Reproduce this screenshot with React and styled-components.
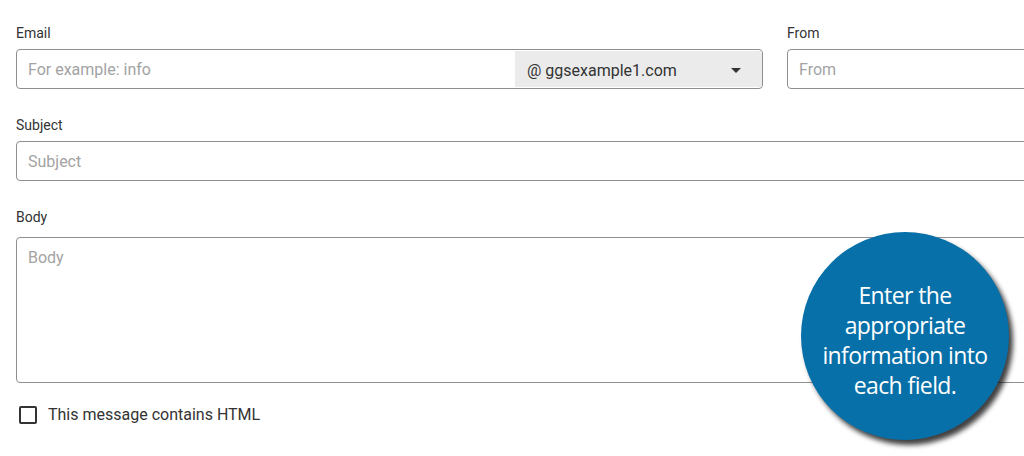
import styled, { createGlobalStyle } from 'styled-components';

const GlobalStyle = createGlobalStyle`
  html, body {
    margin: 0;
    padding: 0;
    background: #ffffff;
    overflow: hidden;
    font-family: Roboto, "Liberation Sans", sans-serif;
  }
`;

const Page = styled.div`
  position: relative;
  width: 1024px;
  height: 456px;
  overflow: hidden;
  padding: 24px 0 0 16px;
  box-sizing: border-box;
`;

const Row = styled.div`
  display: flex;
  gap: 24px;
  width: 1060px;
  margin-bottom: ${(p) => p.gapBelow || '27px'};
`;

const Field = styled.div`
  display: flex;
  flex-direction: column;
  flex: ${(p) => (p.width ? `0 0 ${p.width}` : '1')};
`;

const Label = styled.label`
  font-size: 14px;
  color: #333;
  height: 17px;
  line-height: 17px;
  margin-top: 1px;
  margin-bottom: ${(p) => p.gapBelow || '7px'};
`;

const Box = styled.div`
  display: flex;
  align-items: stretch;
  height: ${(p) => p.height || '40px'};
  border: 1px solid #8f8f8f;
  border-radius: 4px;
  box-sizing: border-box;
  overflow: hidden;
`;

const Input = styled.input`
  flex: 1;
  min-width: 0;
  border: none;
  outline: none;
  padding: 0 11px;
  font-family: Roboto, "Liberation Sans", sans-serif;
  font-size: 16px;
  color: #333;
  background: transparent;
  &::placeholder {
    color: #a3a3a3;
  }
`;

const TextArea = styled.textarea`
  flex: 1;
  border: none;
  outline: none;
  resize: none;
  padding: 10px 11px;
  font-family: Roboto, "Liberation Sans", sans-serif;
  font-size: 16px;
  background: transparent;
  &::placeholder {
    color: #a3a3a3;
  }
`;

const Domain = styled.div`
  display: flex;
  align-items: center;
  justify-content: space-between;
  width: 247px;
  margin: 1px 0;
  padding: 2px 21px 0 12px;
  box-sizing: border-box;
  background: #ebebeb;
  font-size: 16px;
  color: #333;
`;

const Caret = styled.span`
  width: 0;
  height: 0;
  border-left: 5px solid transparent;
  border-right: 5px solid transparent;
  border-top: 5px solid #333;
`;

const CheckRow = styled.div`
  display: flex;
  align-items: center;
  gap: 11px;
  margin-top: 22px;
  padding-left: 3px;
  font-size: 16px;
  color: #333;
`;

const CheckBox = styled.span`
  width: 14px;
  height: 14px;
  border: 2px solid #333;
  border-radius: 2px;
`;

const Bubble = styled.div`
  position: absolute;
  left: 801px;
  top: 232px;
  width: 208px;
  height: 208px;
  border-radius: 50%;
  background: #0870a8;
  box-shadow: 4px 5px 5px rgba(0, 0, 0, 0.75);
  display: flex;
  align-items: center;
  justify-content: center;
  text-align: center;
  color: #fff;
  font-family: "Open Sans", "Noto Sans", sans-serif;
  font-size: 23px;
  line-height: 30px;
  letter-spacing: -0.6px;
  padding-top: 7px;
  box-sizing: border-box;
  white-space: nowrap;
`;

const App = () => {
  return (
    <>
      <GlobalStyle />
      <Page>
        <Row>
          <Field width="747px">
            <Label>Email</Label>
            <Box>
              <Input placeholder="For example: info" />
              <Domain>
                <span>@ ggsexample1.com</span>
                <Caret />
              </Domain>
            </Box>
          </Field>
          <Field>
            <Label>From</Label>
            <Box>
              <Input placeholder="From" />
            </Box>
          </Field>
        </Row>
        <Row>
          <Field>
            <Label>Subject</Label>
            <Box>
              <Input placeholder="Subject" />
            </Box>
          </Field>
        </Row>
        <Row gapBelow="0">
          <Field>
            <Label gapBelow="11px">Body</Label>
            <Box height="146px">
              <TextArea placeholder="Body" />
            </Box>
          </Field>
        </Row>
        <CheckRow>
          <CheckBox />
          <span>This message contains HTML</span>
        </CheckRow>
        <Bubble>
          Enter the
          <br />
          appropriate
          <br />
          information into
          <br />
          each field.
        </Bubble>
      </Page>
    </>
  );
};

export default App;
